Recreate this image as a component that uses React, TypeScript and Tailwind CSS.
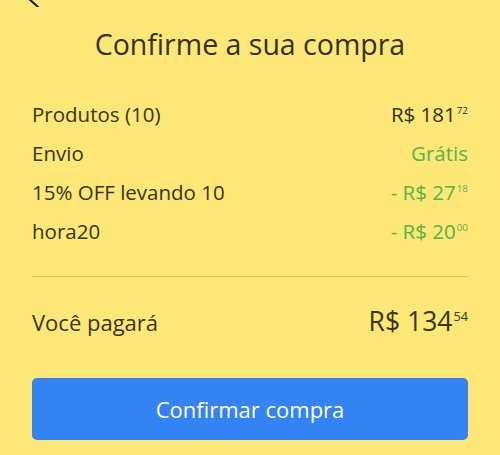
const rows = [
  { label: "Produtos (10)", value: "R$ 181", cents: "72", green: false },
  { label: "Envio", value: "Grátis", cents: "", green: true },
  { label: "15% OFF levando 10", value: "- R$ 27", cents: "18", green: true },
  { label: "hora20", value: "- R$ 20", cents: "00", green: true },
];

const Price = ({ value, cents, className }: { value: string; cents: string; className: string }) => (
  <span className={className}>
    {value}
    {cents && <sup className="ml-[1px] top-[-0.8em] text-[0.48em] align-baseline relative">{cents}</sup>}
  </span>
);

export default function App() {
  return (
    <div
      className="w-[500px] h-[455px] bg-[#fde776] text-[#37351c] overflow-hidden"
      style={{ fontFamily: '"Open Sans", sans-serif' }}
    >
      <svg width="20" height="20" viewBox="0 0 20 20" className="ml-[20px] mt-[-13px] block" fill="none">
        <path d="M17 3 L8 11 L18 20" stroke="#222" strokeWidth="2.2" strokeLinecap="round" />
      </svg>
      <h1 className="text-center text-[28.5px] leading-[36px] mt-[19px] text-[#34321a]">Confirme a sua compra</h1>

      <div className="px-8 mt-[38px]">
        <div className="flex flex-col gap-[11px]">
          {rows.map((r) => (
            <div key={r.label} className="flex justify-between items-center h-[28px] text-[20.5px]">
              <span>{r.label}</span>
              <Price
                value={r.value}
                cents={r.cents}
                className={r.green ? "text-[#5bb248]" : "text-[#34321a]"}
              />
            </div>
          ))}
        </div>

        <div className="h-px bg-[#d6c167] mt-[31px]" />

        <div className="flex justify-between items-center h-[34px] mt-[28px]">
          <span className="text-[22px]">Você pagará</span>
          <Price value="R$ 134" cents="54" className="text-[26.5px]" />
        </div>

        <button className="mt-[39px] w-full h-[62px] rounded-[5px] bg-[#3483f5] text-white text-[22px]">
          Confirmar compra
        </button>
      </div>
    </div>
  );
}
